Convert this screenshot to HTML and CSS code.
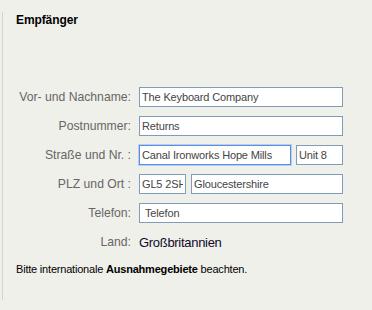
FILE: index.html
```html
<!DOCTYPE html>
<html lang="de">
<head>
<meta charset="utf-8">
<title>Empfänger</title>
<link rel="stylesheet" href="styles.css">
</head>
<body>
<section class="panel">
  <h2 class="title">Empfänger</h2>
  <form class="form">
    <label class="label" for="name">Vor- und Nachname:</label>
    <div class="field"><input class="input" id="name" value="The Keyboard Company"></div>

    <label class="label" for="post">Postnummer:</label>
    <div class="field"><input class="input" id="post" value="Returns"></div>

    <label class="label" for="street">Straße und Nr. :</label>
    <div class="field split-street">
      <input class="input focused" id="street" value="Canal Ironworks Hope Mills">
      <input class="input" value="Unit 8">
    </div>

    <label class="label" for="plz">PLZ und Ort :</label>
    <div class="field split-city">
      <input class="input" id="plz" value="GL5 2SH">
      <input class="input" value="Gloucestershire">
    </div>

    <label class="label" for="tel">Telefon:</label>
    <div class="field"><input class="input phone" id="tel" value="Telefon"></div>

    <span class="label">Land:</span>
    <div class="field country">Großbritannien</div>
  </form>
  <p class="note">Bitte internationale <b>Ausnahmegebiete</b> beachten.</p>
</section>
</body>
</html>
```
FILE: styles.css
```css
html, body {
  margin: 0;
  padding: 0;
  background: #f0f0ea;
  font-family: "Liberation Sans", Arial, sans-serif;
}

.panel {
  margin: 12px 0 0 2px;
  height: 288px;
  border-left: 1px solid #d4d4ce;
  box-sizing: border-box;
  padding: 0 0 0 13px;
}

.title {
  margin: 0;
  padding-top: 1px;
  font-size: 12px;
  line-height: 14px;
  font-weight: bold;
  color: #000;
  letter-spacing: -0.1px;
}

.form {
  display: grid;
  grid-template-columns: 115px 204px;
  grid-auto-rows: 20px;
  column-gap: 8px;
  row-gap: 9px;
  margin: 60px 0 0 0;
}

.label {
  text-align: right;
  font-size: 12.2px;
  line-height: 20px;
  color: #666;
  white-space: nowrap;
}

.field {
  display: flex;
  height: 20px;
}

.split-street { gap: 5px; }
.split-street .input:first-child { width: 152px; }
.split-street .input:last-child { width: 47px; }

.split-city { gap: 5px; }
.split-city .input:first-child { width: 47px; }
.split-city .input:last-child { width: 152px; }

.input {
  box-sizing: border-box;
  width: 204px;
  height: 20px;
  margin: 0;
  border: 1px solid #7f9db9;
  background: #fff;
  padding: 0 2px;
  font-family: "Liberation Sans", Arial, sans-serif;
  font-size: 11px;
  letter-spacing: -0.15px;
  color: #444;
  outline: none;
}

.input.focused {
  border: 1px solid #5b8ee0;
  box-shadow: 0 0 0 1px #b4cff4;
}

.input.phone { padding-left: 5px; }

.country {
  align-items: center;
  font-size: 13px;
  letter-spacing: -0.3px;
  color: #10082a;
}

.note {
  margin: 11px 0 0 0;
  font-size: 11px;
  line-height: 13px;
  letter-spacing: -0.2px;
  color: #000;
}
```
